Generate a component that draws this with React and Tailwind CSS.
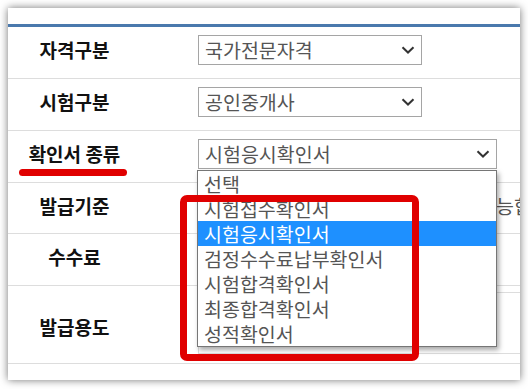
import React from "react";

const options = [
  "선택",
  "시험접수확인서",
  "시험응시확인서",
  "검정수수료납부확인서",
  "시험합격확인서",
  "최종합격확인서",
  "성적확인서",
];

function Chevron() {
  return (
    <svg width="14" height="8" viewBox="0 0 14 8" className="shrink-0">
      <polyline
        points="1.5,1.2 7,6.5 12.5,1.2"
        fill="none"
        stroke="#333"
        strokeWidth="2"
      />
    </svg>
  );
}

function SelectBox({ value, width }) {
  return (
    <div
      className={`flex h-[30px] items-center justify-between border border-[#a5a5a5] bg-white pl-[6px] pr-[6px] text-[19.5px] leading-[28px] text-[#555] ${width}`}
    >
      <span>{value}</span>
      <Chevron />
    </div>
  );
}

function Label({ children }) {
  return (
    <div className="flex h-[30px] w-[133px] shrink-0 items-center justify-center text-[19px] font-bold text-[#111]">
      {children}
    </div>
  );
}

export default function App() {
  return (
    <div className="h-[389px] w-[528px] bg-white pl-2 pt-2 font-['Noto_Sans_CJK_KR',sans-serif]">
      <div className="relative h-[372px] w-[512px] overflow-hidden bg-white shadow-[0_0_8px_rgba(0,0,0,0.55)]">
        <div className="h-4" />
        <div className="h-[3px] bg-[#4a79ad]" />

        <div className="flex h-[52px] items-start border-b border-[#ddd] pt-2">
          <Label>자격구분</Label>
          <div className="pl-[57px]">
            <SelectBox value="국가전문자격" width="w-[224px]" />
          </div>
        </div>

        <div className="flex h-[52px] items-start border-b border-[#ddd] pt-2">
          <Label>시험구분</Label>
          <div className="pl-[57px]">
            <SelectBox value="공인중개사" width="w-[224px]" />
          </div>
        </div>

        <div className="flex h-[52px] items-start border-b border-[#ddd] pt-2">
          <Label>확인서 종류</Label>
          <div className="pl-[57px]">
            <SelectBox value="시험응시확인서" width="w-[299px]" />
          </div>
        </div>

        <div className="flex h-[51px] items-start border-b border-[#ddd] pt-2">
          <Label>발급기준</Label>
          <div className="flex h-[30px] items-center whitespace-nowrap pl-[355px] text-[19.5px] text-[#555]">
            능합니다
          </div>
        </div>

        <div className="flex h-[52px] items-start border-b border-[#ddd] pt-2">
          <Label>수수료</Label>
        </div>

        <div className="flex h-[78px] items-start border-b border-[#ddd] pt-[6px]">
          <div className="self-center">
            <Label>발급용도</Label>
          </div>
          <div className="pl-[57px]">
            <div className="h-[62px] w-[400px] border border-[#ddd]" />
          </div>
        </div>

        <div className="whitespace-nowrap pl-1 pt-[14px] text-[15px] text-[#555]">
          ※ 확인서 발급 후 인쇄 버튼을 눌러 출력하시기 바랍니다.
        </div>

        <div className="absolute left-[11px] top-[161px] h-[7px] w-[108px] rounded-full bg-[#e00000]" />

        <div className="absolute left-[189px] top-[162px] w-[300px] border border-[#767676] bg-white shadow-[2px_3px_5px_rgba(0,0,0,0.35)]">
          {options.map((o, i) => (
            <div
              key={o}
              className={
                i === 2
                  ? "h-[25px] bg-[#1e90ff] pl-[6px] text-[19.5px] leading-[25px] text-white"
                  : "h-[25px] pl-[6px] text-[19.5px] leading-[25px] text-[#555]"
              }
            >
              {o}
            </div>
          ))}
        </div>

        <div className="absolute left-[172px] top-[187px] h-[166px] w-[239px] rounded-[7px] border-[7px] border-[#e00000]" />
      </div>
    </div>
  );
}
